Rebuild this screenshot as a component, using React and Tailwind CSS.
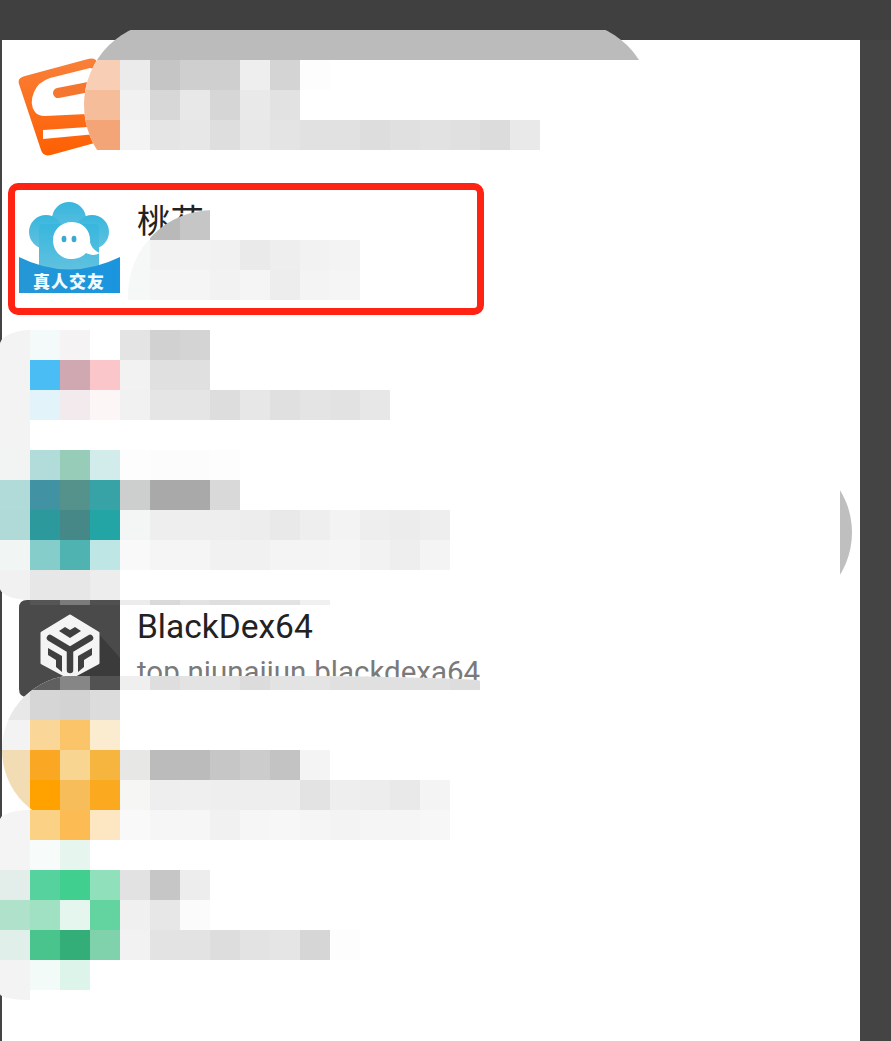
import React from 'react';

const appFont = "font-['Roboto','Noto_Sans_CJK_SC',sans-serif]";

const SogouIcon = () => (
  <svg width="102" height="100" viewBox="0 0 102 100" className="shrink-0">
    <defs>
      <linearGradient id="sogouBg" x1="0" y1="0" x2="0" y2="1">
        <stop offset="0" stopColor="#f98039" />
        <stop offset="1" stopColor="#fe5f02" />
      </linearGradient>
    </defs>
    <path d="M7 18 L70 1 Q78 -1 80 6 L102 78 L33 97 Q25 99 23 92 L1 26 Q-1 20 7 18 Z" fill="url(#sogouBg)" />
    <path d="M72 10 L32 20 Q20 24 16 34 Q11 46 17 54 Q20 58 27 58 L90 55 L88 14 Z" fill="#fff" />
    <path d="M40 35 L76 28" stroke="#f5772f" strokeWidth="10" strokeLinecap="round" />
    <path d="M25 72 L70 69 L80 69 L78 76 L25 81 Z" fill="#fff" />
  </svg>
);

const PeachIcon = () => (
  <svg width="101" height="96" viewBox="0 0 101 96" className="shrink-0">
    <defs>
      <linearGradient id="cloudBg" x1="0" y1="0" x2="0" y2="1">
        <stop offset="0" stopColor="#38b6dd" />
        <stop offset="1" stopColor="#62c2df" />
      </linearGradient>
      <linearGradient id="bannerBg" x1="0" y1="0" x2="1" y2="0">
        <stop offset="0" stopColor="#2597d6" />
        <stop offset="1" stopColor="#1a95de" />
      </linearGradient>
    </defs>
    <g fill="url(#cloudBg)">
      <circle cx="50" cy="19" r="17" />
      <circle cx="27" cy="32" r="17" />
      <circle cx="73" cy="32" r="17" />
      <rect x="20" y="24" width="60" height="48" rx="4" />
    </g>
    <path
      d="M53 22 C65 22 72 32 71 42 C72 47 76 51 81 53 C76 56 71 55 67 53 C62 58 57 59 52 59 C41 59 34 50 34 40 C34 30 42 22 53 22 Z"
      fill="#fff"
    />
    <ellipse cx="45" cy="39" rx="2.4" ry="3.2" fill="#3ba8cf" />
    <ellipse cx="55" cy="39" rx="2.4" ry="3.2" fill="#3ba8cf" />
    <path d="M0 57 Q50 82 101 57 L101 93 L0 93 Z" fill="url(#bannerBg)" />
    <text
      x="50"
      y="88"
      textAnchor="middle"
      fill="#f2fafd"
      fontSize="17"
      fontWeight="900"
      letterSpacing="1"
      fontFamily="'Noto Sans CJK SC', sans-serif"
    >
      真人交友
    </text>
  </svg>
);

const BlackDexIcon = () => (
  <svg width="101" height="97" viewBox="0 0 101 97" className="shrink-0">
    <path d="M8 0 L101 0 L101 97 L8 97 Q0 97 0 89 L0 8 Q0 0 8 0 Z" fill="#4a4a4a" />
    <path d="M79 33 L101 58 L101 97 L50 97 L51 78 Z" fill="#3b3b3b" />
    <path d="M51 16 L79 33 L79 63 L51 78 L23 63 L23 33 Z" fill="#f4f4f4" stroke="#f4f4f4" strokeWidth="3" strokeLinejoin="round" />
    <path d="M40 31 L46 27 L51 30 L56 27 L62 31 L51 38 Z" fill="#3f3f3f" />
    <path d="M31 38 L51 50 L71 38 M51 50 L51 70" fill="none" stroke="#3f3f3f" strokeWidth="6.5" strokeLinecap="round" />
    <path d="M29 48 L43 56 L43 72 L37 67 L37 60 L29 55 Z" fill="#3f3f3f" />
    <path d="M73 48 L59 56 L59 72 L65 67 L65 60 L73 55 Z" fill="#3f3f3f" />
  </svg>
);

// one row of mosaic tiles, every tile is 30px wide
const Tiles = ({ cells, height = 'h-[30px]' }) => (
  <div className={`flex bg-white ${height}`}>
    {cells.map((c, i) => (
      <div key={i} className={`w-[30px] shrink-0 ${c}`} />
    ))}
  </div>
);

const sogouRows = [
  ['bg-[#f8cfb4]', 'bg-[#f8cfb4]', 'bg-[#ebebeb]', 'bg-[#c5c5c5]', 'bg-[#cfcfcf]', 'bg-[#cfcfcf]', 'bg-[#eeeeee]', 'bg-[#d4d4d4]', 'bg-[#fdfdfd]'],
  ['bg-[#f6bd9b]', 'bg-[#f6bd9b]', 'bg-[#f1f1f1]', 'bg-[#d7d7d7]', 'bg-[#e8e8e8]', 'bg-[#d6d6d6]', 'bg-[#e9e9e9]', 'bg-[#e2e2e2]'],
  ['bg-[#f4a577]', 'bg-[#f4a577]', 'bg-[#f3f3f3]', 'bg-[#e5e5e5]', 'bg-[#e7e7e7]', 'bg-[#dedede]', 'bg-[#e8e8e8]', 'bg-[#e4e4e4]', 'bg-[#e1e1e1]', 'bg-[#e1e1e1]', 'bg-[#dddddd]', 'bg-[#e0e0e0]', 'bg-[#e2e2e2]', 'bg-[#e0e0e0]', 'bg-[#dcdcdc]', 'bg-[#e9e9e9]'],
];

const peachRows = [
  ['bg-[#f2f2f2]', 'bg-[#f2f2f2]', 'bg-[#f1f1f1]', 'bg-[#eaeaea]', 'bg-[#eeeeee]', 'bg-[#f2f2f2]', 'bg-[#f3f3f3]'],
  ['bg-[#f5f5f5]', 'bg-[#f5f5f5]', 'bg-[#f2f2f2]', 'bg-[#f5f5f5]', 'bg-[#ededed]', 'bg-[#f4f4f4]', 'bg-[#f5f5f5]'],
];

const thirdRows = [
  ['bg-[#f3f3f3]', 'bg-[#f3faf9]', 'bg-[#f6f3f4]', 'bg-white', 'bg-[#e4e4e4]', 'bg-[#d1d1d1]', 'bg-[#d4d4d4]'],
  ['bg-[#f3f3f3]', 'bg-[#4abdf5]', 'bg-[#d0a8b2]', 'bg-[#fac6ca]', 'bg-[#f2f2f2]', 'bg-[#e0e0e0]', 'bg-[#e0e0e0]'],
  ['bg-[#f3f3f3]', 'bg-[#e2f4f9]', 'bg-[#f2eaed]', 'bg-[#fcf7f6]', 'bg-[#f1f1f1]', 'bg-[#e5e5e5]', 'bg-[#e5e5e5]', 'bg-[#dddddd]', 'bg-[#e7e7e7]', 'bg-[#e0e0e0]', 'bg-[#e4e4e4]', 'bg-[#e2e2e2]', 'bg-[#e7e7e7]'],
  ['bg-[#f3f3f3]'],
  ['bg-[#f2f3f3]', 'bg-[#b1dcda]', 'bg-[#97ccb9]', 'bg-[#d2ebeb]', 'bg-[#fdfdfd]', 'bg-[#fcfcfc]', 'bg-[#fcfcfc]', 'bg-[#fdfdfd]'],
  ['bg-[#b1dbd9]', 'bg-[#4193a4]', 'bg-[#56928c]', 'bg-[#37a3a6]', 'bg-[#cdcfce]', 'bg-[#a9a9a9]', 'bg-[#a9a9a9]', 'bg-[#d9d9d9]'],
  ['bg-[#b0dad8]', 'bg-[#2c9a9c]', 'bg-[#468888]', 'bg-[#23a5a5]', 'bg-[#f4f6f5]', 'bg-[#eeeeee]', 'bg-[#eeeeee]', 'bg-[#eeeeee]', 'bg-[#ededed]', 'bg-[#e9e9e9]', 'bg-[#eeeeee]', 'bg-[#f3f3f3]', 'bg-[#eeeeee]', 'bg-[#ececec]', 'bg-[#eeeeee]'],
  ['bg-[#f1f5f4]', 'bg-[#84cdca]', 'bg-[#4fb4b1]', 'bg-[#bee6e4]', 'bg-[#f9f9f9]', 'bg-[#f5f5f5]', 'bg-[#f5f5f5]', 'bg-[#f1f1f1]', 'bg-[#f1f1f1]', 'bg-[#f4f4f4]', 'bg-[#f4f4f4]', 'bg-[#f5f5f5]', 'bg-[#f2f2f2]', 'bg-[#eeeeee]', 'bg-[#f4f4f4]'],
  ['bg-[#f1f1f1]', 'bg-[#e7e7e7]', 'bg-[#e7e7e7]', 'bg-[#ededed]'],
];

const dexTop = ['bg-[#545554]', 'bg-[#7a7b7a]', 'bg-[#505050]', 'bg-[#ececec]', 'bg-[#d9d9d9]', 'bg-[#e2e2e2]', 'bg-[#dedede]', 'bg-[#e2e2e2]', 'bg-[#e2e2e2]', 'bg-[#f0f0f0]'];

const fourthRows = [
  ['bg-[#e8e8e8]', 'bg-[#d6d6d6]', 'bg-[#d3d3d3]', 'bg-[#dcdcdc]'],
  ['bg-[#f3f3f3]', 'bg-[#fad698]', 'bg-[#fbc468]', 'bg-[#fbecd0]'],
  ['bg-[#f2dcb4]', 'bg-[#faa823]', 'bg-[#f9d592]', 'bg-[#f5b53f]', 'bg-[#e7e7e6]', 'bg-[#bbbbbb]', 'bg-[#bbbbbb]', 'bg-[#c6c6c6]', 'bg-[#cccccc]', 'bg-[#c3c3c3]', 'bg-[#f4f4f4]'],
  ['bg-[#f2dcb4]', 'bg-[#ffa200]', 'bg-[#f6bd5a]', 'bg-[#fba91f]', 'bg-[#f6f6f5]', 'bg-[#eeeeee]', 'bg-[#efefef]', 'bg-[#eeeeee]', 'bg-[#eeeeee]', 'bg-[#eeeeee]', 'bg-[#e3e3e3]', 'bg-[#eeeeee]', 'bg-[#ededed]', 'bg-[#e9e9e9]', 'bg-[#f4f4f4]'],
];

const fourthBottom = ['bg-[#fbd186]', 'bg-[#fcbc53]', 'bg-[#fde6c2]', 'bg-[#f9f9f9]', 'bg-[#f6f6f6]', 'bg-[#f6f6f6]', 'bg-[#f1f1f1]', 'bg-[#f6f6f6]', 'bg-[#f7f7f7]', 'bg-[#f5f5f5]', 'bg-[#f3f3f3]', 'bg-[#f5f5f5]', 'bg-[#f5f5f5]', 'bg-[#f7f7f7]'];

const fifthRows = [
  ['bg-[#f4f4f4]'],
  ['bg-[#f4f4f4]', 'bg-[#f7fcfa]', 'bg-[#e6f6ef]'],
  ['bg-[#e3eeea]', 'bg-[#55d29d]', 'bg-[#40cf8f]', 'bg-[#8fe0bb]', 'bg-[#e1e2e1]', 'bg-[#c6c6c6]', 'bg-[#ededed]'],
  ['bg-[#b0e2cb]', 'bg-[#9fe1c2]', 'bg-[#e5f6ef]', 'bg-[#63d3a0]', 'bg-[#eff0ef]', 'bg-[#e7e7e7]', 'bg-[#fbfbfb]'],
  ['bg-[#e0efea]', 'bg-[#49c48d]', 'bg-[#34ae78]', 'bg-[#80d2ac]', 'bg-[#f2f2f2]', 'bg-[#e3e3e3]', 'bg-[#e3e3e3]', 'bg-[#dddddd]', 'bg-[#e3e3e3]', 'bg-[#e5e5e5]', 'bg-[#d6d6d6]', 'bg-[#fdfdfd]'],
  ['bg-[#f3f3f3]', 'bg-[#f2fbf8]', 'bg-[#ddf4eb]'],
];

const App = () => {
  return (
    <div className={`relative h-[1041px] w-[891px] overflow-hidden bg-[#444444] ${appFont}`}>
      <div className="h-[40px] bg-[#404040]" />
      <div className="ml-[2px] h-[1001px] w-[858px] bg-white">
        <div className="flex h-[141px] items-start pl-[16px] pt-[18px]">
          <SogouIcon />
        </div>
        <div className="flex h-[133px] items-start gap-[17px] pl-[17px] pt-[19px]">
          <PeachIcon />
          <div className="text-[33.5px] leading-[44px] text-[#222222]">桃花</div>
        </div>
        <div className="h-[133px]" />
        <div className="h-[133px]" />
        <div className="flex h-[133px] items-start gap-[17px] pl-[17px] pt-[20px]">
          <BlackDexIcon />
          <div className="mt-[5px] flex flex-col gap-[5px]">
            <div className="text-[33.5px] leading-[44px] text-[#222222]">BlackDex64</div>
            <div className="text-[29.5px] leading-[36px] text-[#7a7a7a]">top.niunaijun.blackdexa64</div>
          </div>
        </div>
      </div>

      {/* mosaic patches lying over the list */}
      <div className="absolute left-[60px] top-[30px] h-[120px] w-[600px] [clip-path:inset(-9px_8px_-39px_24px_round_84px)]">
        <div className="h-[30px] bg-[#bbbbbb]" />
        {sogouRows.map((cells, i) => (
          <Tiles key={i} cells={cells} />
        ))}
      </div>

      <div className="absolute left-[120px] top-[210px] h-[90px] w-[240px] [clip-path:inset(0_0_0_8px_round_85px_0_0_0)]">
        <div className="flex h-[30px]">
          <div className="w-[30px]" />
          <div className="w-[30px] bg-[#b9b9b9]" />
          <div className="w-[30px] bg-[#c6c6c6]" />
        </div>
        {peachRows.map((cells, i) => (
          <Tiles key={i} cells={['bg-[#f6f8f8]', ...cells]} />
        ))}
      </div>

      <div className="absolute left-0 top-[330px] w-[450px] overflow-hidden [border-radius:30px_0_0_30px/15px_0_0_12px]">
        {thirdRows.map((cells, i) => (
          <Tiles key={i} cells={cells} />
        ))}
      </div>
      <div className="absolute left-[30px] top-[600px]">
        <Tiles cells={dexTop} height="h-[5px]" />
      </div>

      <div className="absolute left-0 top-[810px] w-[360px] overflow-hidden [border-radius:30px_0_0_30px/10px_0_0_6px]">
        {fifthRows.map((cells, i) => (
          <Tiles key={i} cells={cells} />
        ))}
        <div className="h-[10px] w-[30px] bg-[#f3f3f3]" />
      </div>

      <div className="absolute left-0 top-[676px] h-[134px] w-[480px] [clip-path:inset(-1px_0_-15px_2px_round_75px_360px_0_75px/75px_6px_0_75px)]">
        <Tiles
          height="h-[14px]"
          cells={['bg-[#e8e8e8]', 'bg-[#5f5f5f]', 'bg-[#858685]', 'bg-[#525252]', 'bg-[#efefef]', 'bg-[#dedede]', 'bg-[#e3e3e3]', 'bg-[#e3e3e3]', 'bg-[#dcdcdc]', 'bg-[#e3e3e3]', 'bg-[#e4e4e4]', 'bg-[#e0e0e0]', 'bg-[#e0e0e0]', 'bg-[#e0e0e0]', 'bg-[#e0e0e0]', 'bg-[#dddddd]']}
        />
        {fourthRows.map((cells, i) => (
          <Tiles key={i} cells={cells} />
        ))}
      </div>
      <div className="absolute left-[30px] top-[810px]">
        <Tiles cells={fourthBottom} />
      </div>

      <div className="absolute left-[840px] top-[490px] h-[85px] w-[12px] bg-[#bfbfbf] [clip-path:circle(81px_at_-69px_42.5px)]" />

      {/* red highlight round the second row */}
      <div className="absolute left-[8px] top-[183px] h-[132px] w-[476px] rounded-[10px] border-[7px] border-[#ff2314]" />
    </div>
  );
};

export default App;
